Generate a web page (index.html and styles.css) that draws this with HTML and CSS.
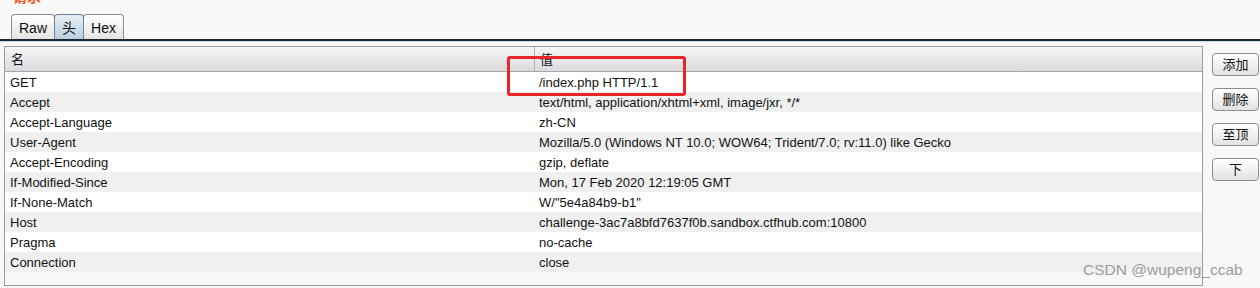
FILE: index.html
```html
<!DOCTYPE html>
<html>
<head>
<meta charset="utf-8">
<link rel="stylesheet" href="styles.css">
</head>
<body>
<div class="page">
  <div class="title">请求</div>
  <div class="tabs">
    <div class="tab">Raw</div>
    <div class="tab active">头</div>
    <div class="tab">Hex</div>
  </div>
  <div class="tabline"></div>
  <div class="main">
    <div class="table">
      <div class="thead">
        <div class="c1">名</div>
        <div class="c2 hsep">值</div>
      </div>
      <div class="row"><div class="c1">GET</div><div class="c2">/index.php HTTP/1.1</div></div>
      <div class="row alt"><div class="c1">Accept</div><div class="c2">text/html, application/xhtml+xml, image/jxr, */*</div></div>
      <div class="row"><div class="c1">Accept-Language</div><div class="c2">zh-CN</div></div>
      <div class="row alt"><div class="c1">User-Agent</div><div class="c2">Mozilla/5.0 (Windows NT 10.0; WOW64; Trident/7.0; rv:11.0) like Gecko</div></div>
      <div class="row"><div class="c1">Accept-Encoding</div><div class="c2">gzip, deflate</div></div>
      <div class="row alt"><div class="c1">If-Modified-Since</div><div class="c2">Mon, 17 Feb 2020 12:19:05 GMT</div></div>
      <div class="row"><div class="c1">If-None-Match</div><div class="c2">W/"5e4a84b9-b1"</div></div>
      <div class="row alt"><div class="c1">Host</div><div class="c2">challenge-3ac7a8bfd7637f0b.sandbox.ctfhub.com:10800</div></div>
      <div class="row"><div class="c1">Pragma</div><div class="c2">no-cache</div></div>
      <div class="row alt"><div class="c1">Connection</div><div class="c2">close</div></div>
    </div>
    <div class="buttons">
      <div class="btn">添加</div>
      <div class="btn">删除</div>
      <div class="btn">至顶</div>
      <div class="btn">下</div>
    </div>
  </div>
  <div class="highlight"></div>
  <div class="watermark">CSDN @wupeng_ccab</div>
</div>
</body>
</html>
```
FILE: styles.css
```css
* { box-sizing: border-box; }
html, body { margin: 0; padding: 0; }
body {
  width: 1260px;
  height: 288px;
  overflow: hidden;
  background: #f8f8f8;
  font-family: "Liberation Sans", Arial, "Noto Sans CJK SC", sans-serif;
  font-size: 13px;
  color: #111;
}
.page { position: relative; height: 288px; }
.title {
  padding-left: 13px;
  color: #f05a28;
  font-weight: bold;
  font-size: 14px;
  line-height: 14px;
  position: relative;
  top: -10px;
  margin-bottom: -10px;
  height: 24px;
}
.tabs {
  display: flex;
  padding-left: 11px;
  height: 25px;
  align-items: flex-end;
}
.tab {
  height: 25px;
  padding: 0 7px;
  border: 1px solid #8a8e94;
  border-bottom: none;
  border-radius: 4px 4px 0 0;
  background: linear-gradient(#ffffff, #e4e4e4);
  line-height: 26px;
  font-size: 14px;
  color: #111;
  margin-right: -1px;
}
.tab.active {
  background: linear-gradient(#e8eef4, #b9cfe0);
  border-color: #6d7f90;
  padding: 0 7px;
  position: relative;
  z-index: 1;
}
.tabline {
  height: 3px;
  border-top: 2px solid #1c2530;
  background: #c8d8e8;
  margin-bottom: 4px;
}
.main {
  display: flex;
  align-items: flex-start;
}
.table {
  margin-left: 4px;
  width: 1199px;
  height: 240px;
  border: 1px solid #9a9aa4;
  background: #f8f8f8;
}
.thead {
  display: flex;
  height: 25px;
  background: linear-gradient(#f6f6f6, #dadbdd);
  border-bottom: 1px solid #a6a6a6;
  line-height: 25px;
}
.thead .c1 { padding-left: 6px; }
.thead .c2 { padding-left: 5px; }
.hsep { border-left: 1px solid #b0b0b0; }
.row {
  display: flex;
  height: 20px;
  line-height: 22px;
  overflow: hidden;
  background: #ffffff;
}
.row.alt { background: #f0f0f0; }
.c1 { width: 529px; padding-left: 5px; white-space: nowrap; }
.c2 { flex: 1; padding-left: 4px; white-space: nowrap; }
.row .c2 { padding-left: 5px; }
.buttons {
  display: flex;
  flex-direction: column;
  gap: 12px;
  margin-left: 9px;
  padding-top: 7px;
}
.btn {
  width: 47px;
  height: 23px;
  border: 1px solid #8c8c8c;
  border-radius: 4px;
  background: linear-gradient(#ffffff, #e2e2e2);
  text-align: center;
  line-height: 21px;
  font-size: 13px;
  color: #111;
}
.highlight {
  position: absolute;
  left: 507px;
  top: 56px;
  width: 179px;
  height: 40px;
  border: 3px solid #e8262a;
  border-radius: 3px;
}
.watermark {
  position: absolute;
  left: 1083px;
  top: 261px;
  font-size: 15.5px;
  color: #9c9c9c;
}
```
